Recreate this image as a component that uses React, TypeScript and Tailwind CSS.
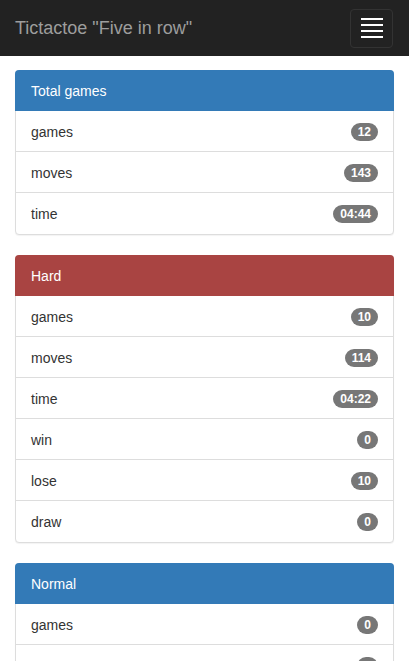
import React from "react";

type Row = { label: string; value: string };
type Panel = { title: string; color: string; rows: Row[] };

const PANELS: Panel[] = [
  {
    title: "Total games",
    color: "bg-[#337ab7]",
    rows: [
      { label: "games", value: "12" },
      { label: "moves", value: "143" },
      { label: "time", value: "04:44" },
    ],
  },
  {
    title: "Hard",
    color: "bg-[#a94442]",
    rows: [
      { label: "games", value: "10" },
      { label: "moves", value: "114" },
      { label: "time", value: "04:22" },
      { label: "win", value: "0" },
      { label: "lose", value: "10" },
      { label: "draw", value: "0" },
    ],
  },
  {
    title: "Normal",
    color: "bg-[#337ab7]",
    rows: [
      { label: "games", value: "0" },
      { label: "moves", value: "0" },
      { label: "time", value: "00:00" },
      { label: "win", value: "0" },
      { label: "lose", value: "0" },
      { label: "draw", value: "0" },
    ],
  },
];

function StatPanel({ panel }: { panel: Panel }) {
  return (
    <div className="mb-5 rounded-[4px] border border-[#ddd] bg-white shadow-[0_1px_1px_rgba(0,0,0,0.05)]">
      {/* heading overlaps the panel border */}
      <div
        className={`${panel.color} -mx-px -mt-px rounded-t-[4px] border-b border-transparent px-[16px] pt-[11px] pb-[9px] text-[14px] leading-[20px] text-white`}
      >
        {panel.title}
      </div>
      {panel.rows.map((row, i) => (
        <div
          key={row.label}
          className={`flex items-center justify-between px-[15px] pt-[11px] text-[14px] leading-[20px] text-[#333] ${
            i < panel.rows.length - 1 ? "border-b border-[#ddd] pb-[9px]" : "pb-[10px]"
          }`}
        >
          <span>{row.label}</span>
          <span className="rounded-[10px] bg-[#777] px-[7px] py-[3px] text-[12px] font-bold leading-[12px] text-white">
            {row.value}
          </span>
        </div>
      ))}
    </div>
  );
}

export default function App() {
  return (
    <div className="min-h-screen bg-white font-['Liberation_Sans',Arial,sans-serif]">
      {/* Navbar */}
      <nav className="flex h-[56px] items-center justify-between bg-[#222] pl-[15px] pr-[16px]">
        <span className="text-[18px] leading-[20px] text-[#9d9d9d]">Tictactoe "Five in row"</span>
        <button className="flex h-[39px] w-[43px] flex-col items-center justify-center gap-[4px] rounded-[4px] border border-[#333]">
          <span className="block h-[2px] w-[22px] bg-white" />
          <span className="block h-[2px] w-[22px] bg-white" />
          <span className="block h-[2px] w-[22px] bg-white" />
          <span className="block h-[2px] w-[22px] bg-white" />
        </button>
      </nav>

      <div className="px-[15px] pt-[14px]">
        {PANELS.map((p) => (
          <StatPanel key={p.title} panel={p} />
        ))}
      </div>
    </div>
  );
}
